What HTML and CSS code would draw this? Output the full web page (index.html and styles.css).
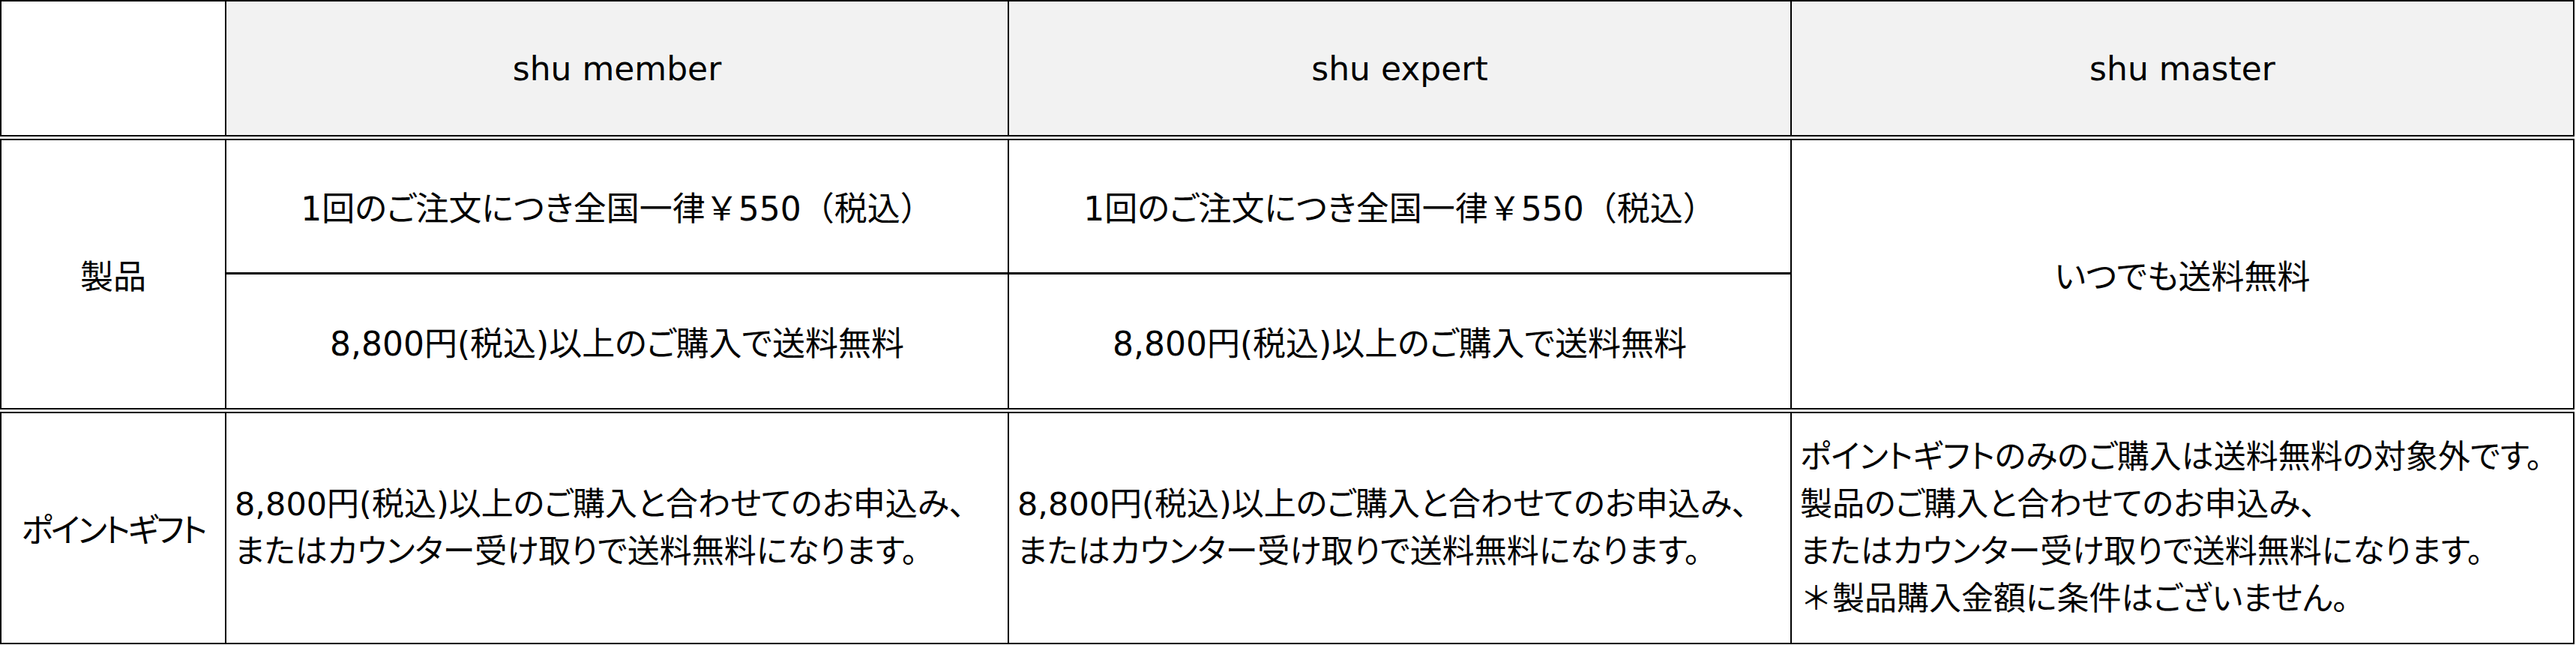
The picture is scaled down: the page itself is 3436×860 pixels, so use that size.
FILE: index.html
```html
<!DOCTYPE html>
<html lang="ja">
<head>
<meta charset="utf-8">
<title>送料</title>
<link rel="stylesheet" href="styles.css">
</head>
<body>
<table class="ship">
  <colgroup>
    <col class="c-label">
    <col class="c-tier">
    <col class="c-tier">
    <col class="c-last">
  </colgroup>
  <thead>
    <tr class="head">
      <th class="corner"></th>
      <th>shu member</th>
      <th>shu expert</th>
      <th>shu master</th>
    </tr>
  </thead>
  <tbody>
    <tr class="prod prod-top">
      <th rowspan="2" class="label">製品</th>
      <td>1回のご注文につき全国一律<span class="fw">￥</span>550<span class="fw">（税込）</span></td>
      <td>1回のご注文につき全国一律<span class="fw">￥</span>550<span class="fw">（税込）</span></td>
      <td rowspan="2">いつでも送料無料</td>
    </tr>
    <tr class="prod">
      <td>8,800円(税込)以上のご購入で送料無料</td>
      <td>8,800円(税込)以上のご購入で送料無料</td>
    </tr>
    <tr class="gift">
      <th class="label label-gift">ポイントギフト</th>
      <td class="note">8,800円(税込)以上のご購入と合わせてのお申込み、<br>またはカウンター受け取りで送料無料になります。</td>
      <td class="note">8,800円(税込)以上のご購入と合わせてのお申込み、<br>またはカウンター受け取りで送料無料になります。</td>
      <td class="note">ポイントギフトのみのご購入は送料無料の対象外です。<br>製品のご購入と合わせてのお申込み、<br>またはカウンター受け取りで送料無料になります。<br><span class="fw">＊</span>製品購入金額に条件はございません。</td>
    </tr>
  </tbody>
</table>
</body>
</html>
```

FILE: styles.css
```css
html, body {
  margin: 0;
  padding: 0;
  background: #ffffff;
}

.ship {
  border-collapse: collapse;
  table-layout: fixed;
  width: 3434px;
  font-family: "DejaVu Sans", "Noto Sans CJK JP", sans-serif;
  font-size: 44px;
  font-feature-settings: "palt";
  color: #000000;
}

.c-label { width: 300px; }
.c-tier { width: 1044px; }

.ship th,
.ship td {
  border: 2px solid #000000;
  padding: 0 11px;
  font-weight: normal;
  text-align: center;
  vertical-align: middle;
}

.ship .head th {
  background: #f2f2f2;
  height: 178px;
  border-bottom: 7px double #000000;
  font-size: 44px;
}

.ship .head .corner {
  background: #ffffff;
}

.ship .prod td {
  height: 178px;
}

.ship .prod-top td {
  height: 176px;
  border-bottom: 3px solid #000000;
}

.ship .gift > th,
.ship .gift > td {
  border-top: 7px double #000000;
  height: 306px;
}

.ship .label-gift {
  letter-spacing: -3px;
  padding: 0;
}

.ship .note {
  text-align: left;
  font-size: 43px;
  line-height: 63px;
}

.fw {
  font-feature-settings: normal;
}
```
